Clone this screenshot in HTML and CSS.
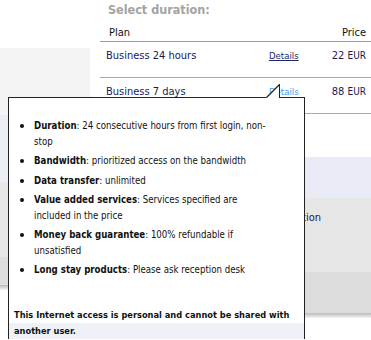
FILE: index.html
```html
<!DOCTYPE html>
<html>
<head>
<meta charset="utf-8">
<meta name="viewport" content="width=device-width, initial-scale=1.0">
<title>Select duration</title>
<link rel="stylesheet" href="styles.css">
</head>
<body>
<div class="page">
    <aside class="sidebar">
        <div class="side-block light"></div>
        <div class="side-block blue"></div>
        <div class="side-block gray"></div>
        <div class="side-block dark"></div>
        <div class="shadow"></div>
    </aside>
    <main class="content">
        <h2 class="title">Select duration:</h2>
        <div class="plans">
            <div class="plan-head">
                <span class="name">Plan</span>
                <span></span>
                <span class="price">Price</span>
            </div>
            <div class="plan-row">
                <span class="name">Business 24 hours</span>
                <a class="details" href="#">Details</a>
                <span class="price">22 <small>EUR</small></span>
            </div>
            <div class="plan-row">
                <span class="name">Business 7 days</span>
                <a class="details hover" href="#">Details</a>
                <span class="price">88 <small>EUR</small></span>
            </div>
        </div>
        <div class="panel blue"></div>
        <div class="panel gray"><span class="panel-label">Connection</span></div>
        <div class="panel dark"></div>
        <div class="shadow"></div>
    </main>
</div>

<div class="tooltip">
    <svg class="tooltip-arrow" width="14" height="15" viewBox="0 0 14 15" xmlns="http://www.w3.org/2000/svg">
        <polygon points="0,14 13,0 14,0 14,15 0,15" fill="#fff"/>
        <line x1="0.5" y1="13.5" x2="13.5" y2="0.5" stroke="#222" stroke-width="1.3"/>
        <line x1="13.5" y1="0" x2="13.5" y2="14" stroke="#222" stroke-width="1"/>
    </svg>
    <ul class="features">
        <li><b>Duration</b>: 24 consecutive hours from first login, non-<br>stop</li>
        <li><b>Bandwidth</b>: prioritized access on the bandwidth</li>
        <li><b>Data transfer</b>: unlimited</li>
        <li><b>Value added services</b>: Services specified are<br>included in the price</li>
        <li><b>Money back guarantee</b>: 100% refundable if<br>unsatisfied</li>
        <li><b>Long stay products</b>: Please ask reception desk</li>
    </ul>
    <p class="notice">This Internet access is personal and cannot be shared with<br>another user.</p>
</div>
</body>
</html>
```

FILE: styles.css
```css
html, body {
    overflow: hidden;
}
body {
    margin: 0;
    padding: 0;
    font-family: "DejaVu Sans Condensed", "DejaVu Sans", sans-serif;
    background: #fff;
    height: 340px;
}
.page {
    display: flex;
    gap: 10px;
}
.sidebar {
    width: 90px;
    flex: none;
    margin-top: 48px;
}
.side-block.light { height: 67px; background: #f4f4f4; }
.side-block.blue { height: 67px; background: #eceef6; }
.side-block.gray { height: 75px; background: #e7e7e7; }
.side-block.dark { height: 28px; background: #dedede; }
.shadow {
    height: 5px;
    background: linear-gradient(#b9b9b9, #f4f4f4);
}
.content {
    flex: 1;
}
.title {
    margin: 0;
    padding-left: 8px;
    height: 20px;
    font-size: 12.5px;
    line-height: 20px;
    font-weight: bold;
    color: #a3a3a3;
}
.plan-head, .plan-row {
    display: grid;
    grid-template-columns: 1fr 30px 72px;
    line-height: 14px;
}
.plan-head {
    padding: 6px 0 1px;
    border-bottom: 1px solid #9a9a9a;
    font-size: 11px;
    color: #111;
}
.plan-head .name {
    padding-left: 9px;
}
.plan-row {
    height: 28px;
    padding-top: 7px;
    border-bottom: 1px solid #a8a8a8;
    font-size: 11px;
    color: #1a1a55;
}
.plan-row .name {
    padding-left: 6px;
}
.price {
    text-align: right;
    padding-right: 5px;
}
.price small {
    font-size: 10px;
}
.details {
    font-size: 9.5px;
    color: #1a2a6c;
    text-decoration: underline;
}
.details.hover {
    color: #3a9cf0;
    text-decoration: none;
}
.plans {
    margin-bottom: 43px;
}
.panel.blue { height: 41px; background: #e8ebf5; }
.panel.gray { height: 74px; background: #e6e6e6; box-sizing: border-box; padding: 13px 0 0 165px; }
.panel.dark { height: 41px; background: #dcdcdc; }
.panel-label {
    display: block;
    font-size: 11px;
    line-height: 14px;
    color: #1a1a55;
}
.tooltip {
    position: absolute;
    left: 8px;
    top: 97px;
    width: 295px;
    height: 241px;
    border: 1px solid #222;
    border-bottom: none;
    background: linear-gradient(#fff 225px, #eef1f8 225px);
    font-size: 9.6px;
    color: #111;
}
.tooltip-arrow {
    position: absolute;
    left: 257px;
    top: -14px;
}
.features {
    list-style: none;
    margin: 0;
    padding: 20px 0 0 25px;
}
.features li {
    position: relative;
    line-height: 15.5px;
    margin-bottom: 4px;
}
.features li::before {
    content: "";
    position: absolute;
    left: -14px;
    top: 6px;
    width: 4px;
    height: 4px;
    border-radius: 50%;
    background: #111;
}
.notice {
    margin: 29px 0 0;
    padding-left: 5px;
    font-size: 9.2px;
    font-weight: bold;
    line-height: 16px;
}
```
